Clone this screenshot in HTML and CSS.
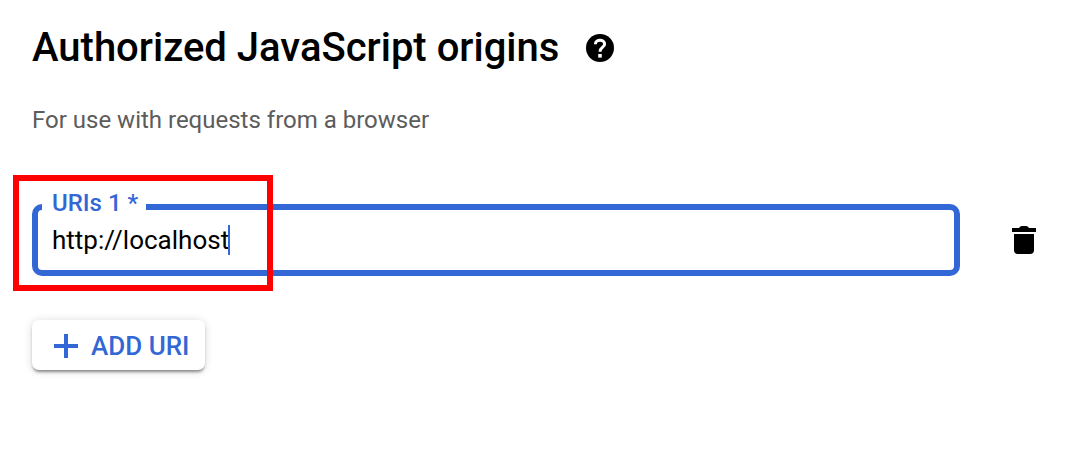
FILE: index.html
```html
<!DOCTYPE html>
<html lang="en">
<head>
<meta charset="utf-8">
<title>Authorized JavaScript origins</title>
<link rel="stylesheet" href="styles.css">
</head>
<body>
<main class="origins">
  <header class="heading">
    <h1 class="title">Authorized JavaScript origins</h1>
    <button class="icon-button" type="button" aria-label="Help">
      <svg width="28" height="28" viewBox="0 0 28 28" aria-hidden="true">
        <circle cx="14" cy="14" r="14"/>
        <path class="help-mark" d="M9.400 10.200C9.400 4.900 18.600 4.900 18.600 10.200C18.600 13.200 14 13.400 14 17.800"/>
        <path class="help-dot" d="M12.200 20h3.600v3.600h-3.600z"/>
      </svg>
    </button>
  </header>
  <p class="hint">For use with requests from a browser</p>
  <div class="uri-row">
    <div class="field">
      <label class="field-label" for="uri">URIs 1 *</label>
      <input class="field-input" id="uri" type="text" value="http://localhost" required>
      <span class="caret"></span>
      <span class="highlight"></span>
    </div>
    <button class="icon-button" type="button" aria-label="Delete item">
      <svg width="24" height="28" viewBox="0 0 24 28" aria-hidden="true"><path d="M0 2h7q1-2 3-2h4q2 0 3 2h7v4H0zM2 8h20v16q0 4-4 4H6q-4 0-4-4z"/></svg>
    </button>
  </div>
  <button class="add-button" type="button">
    <svg width="24" height="24" viewBox="0 0 24 24" aria-hidden="true"><path d="M10 0h4v10h10v4H14v10h-4V14H0v-4h10z"/></svg>
    Add URI
  </button>
</main>
</body>
</html>
```
FILE: styles.css
```css
* { box-sizing: border-box; }

body {
  margin: 0;
  background: #fff;
  color: #000;
  font-family: Roboto, "Liberation Sans", sans-serif;
}

svg {
  display: block;
  fill: currentColor;
}

.origins { padding: 24px 50px 24px 32px; }

.heading {
  display: flex;
  align-items: center;
  gap: 27px;
}

.title {
  margin: 0;
  font-size: 40px;
  font-weight: 500;
  line-height: 48px;
}

.icon-button {
  padding: 0;
  border: 0;
  background: none;
  color: #000;
}

.help-mark {
  fill: none;
  stroke: #fff;
  stroke-width: 3;
}

.help-dot { fill: #fff; }

.hint {
  margin: 32px 0 0;
  color: #5c5c5c;
  font-size: 24px;
  line-height: 32px;
}

.uri-row {
  display: flex;
  align-items: center;
  gap: 52px;
  margin-top: 68px;
}

.field {
  position: relative;
  flex: 1;
}

.field-input {
  display: block;
  width: 100%;
  height: 72px;
  padding: 0 14px;
  border: 6px solid #3367d6;
  border-radius: 10px;
  outline: 0;
  background: #fff;
  color: #000;
  font-family: inherit;
  font-size: 26px;
  line-height: 32px;
}

.field-label {
  position: absolute;
  top: -15px;
  left: 10px;
  padding: 0 8px 0 10px;
  background: #fff;
  color: #3367d6;
  font-size: 24px;
  font-weight: 500;
  line-height: 28px;
}

.caret {
  position: absolute;
  top: 21px;
  left: 196px;
  width: 2px;
  height: 30px;
  background: #3367d6;
}

.highlight {
  position: absolute;
  top: -29px;
  left: -19px;
  width: 260px;
  height: 116px;
  border: 6px solid #f00;
  pointer-events: none;
}

.add-button {
  display: flex;
  align-items: center;
  gap: 13px;
  height: 50px;
  margin-top: 44px;
  padding: 2px 16px 0 22px;
  border: 0;
  border-radius: 7px;
  background: #fff;
  box-shadow: 0 3px 3px -1px rgba(0, 0, 0, 0.4), 0 1px 8px rgba(0, 0, 0, 0.16);
  color: #3367d6;
  font-family: inherit;
  font-size: 26px;
  font-weight: 500;
  line-height: 32px;
  text-transform: uppercase;
}
```
